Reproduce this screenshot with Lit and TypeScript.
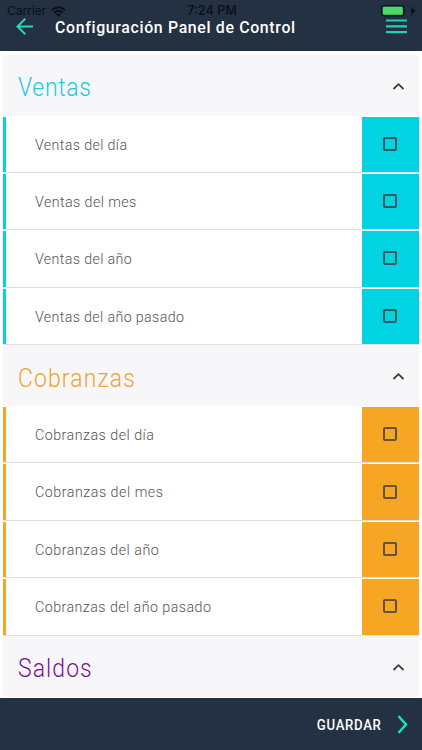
import { LitElement, html, css } from "lit";
import { customElement, property } from "lit/decorators.js";
import { styleMap } from "lit/directives/style-map.js";

interface Item { label: string; spacing: number; }
interface Section { title: string; spacing: number; color: string; ink: string; items: Item[]; }

const SECTIONS: Section[] = [
  { title: "Ventas", spacing: 0.75, color: "#00d4e3", ink: "#20cbdc", items: [
    { label: "Ventas del día", spacing: 0.39 },
    { label: "Ventas del mes", spacing: 0.45 },
    { label: "Ventas del año", spacing: 0.39 },
    { label: "Ventas del año pasado", spacing: 0.38 },
  ] },
  { title: "Cobranzas", spacing: 1.25, color: "#f6a623", ink: "#f0a432", items: [
    { label: "Cobranzas del día", spacing: 0.52 },
    { label: "Cobranzas del mes", spacing: 0.56 },
    { label: "Cobranzas del año", spacing: 0.53 },
    { label: "Cobranzas del año pasado", spacing: 0.48 },
  ] },
  { title: "Saldos", spacing: 1.2, color: "#7f0f91", ink: "#7f1292", items: [] },
];

@customElement("config-section")
class ConfigSection extends LitElement {
  @property({ attribute: false }) section!: Section;

  static styles = css`
    :host { display: block; }
    .head { height: 61px; display: flex; align-items: center; justify-content: space-between; padding: 4px 13.5px 0 15px; box-sizing: border-box; background: #f7f7fa; }
    .title { font-size: 25.5px; font-weight: 300; line-height: 30px; color: var(--ink); white-space: nowrap; transform: scaleX(.9); transform-origin: 0 50%; }
    .chevron { display: block; width: 13px; height: 9px; margin-top: -2px; }
    .row { height: 57.375px; box-sizing: border-box; display: flex; padding-top: 1px; border-bottom: 1px solid #dedede; background: #fff; }
    .bar { width: 3px; background: var(--tone); }
    .label { flex: 1; padding-left: 29px; line-height: 56.5px; height: 55px; font-size: 15.5px; font-weight: 300; color: #555; white-space: nowrap; }
    .text { display: inline-block; transform: scaleX(.92); transform-origin: 0 50%; }
    .tick { width: 57px; box-sizing: border-box; padding: 0 0 1px 21.3px; display: flex; align-items: center; background: var(--tone); }
    .box { width: 14px; height: 14px; box-sizing: border-box; border: 2px solid #444; border-radius: 2px; opacity: .85; }
  `;

  render() {
    const s = this.section;
    return html`
      <div style=${styleMap({ "--tone": s.color, "--ink": s.ink })}>
        <div class="head">
          <span class="title" style=${styleMap({ letterSpacing: s.spacing + "px" })}>${s.title}</span>
          <svg class="chevron" viewBox="0 0 13 9"><path d="M1.5 7 6.5 2.2 11.5 7" fill="none" stroke="#3c3c40" stroke-width="1.8"/></svg>
        </div>
        ${s.items.map((i) => html`
          <div class="row">
            <div class="bar"></div>
            <div class="label"><span class="text" style=${styleMap({ letterSpacing: i.spacing + "px" })}>${i.label}</span></div>
            <div class="tick"><div class="box"></div></div>
          </div>`)}
      </div>`;
  }
}

@customElement("app-root")
class AppRoot extends LitElement {
  static styles = css`
    :host { display: flex; flex-direction: column; height: 750px; overflow: hidden; position: relative; background: #fff; font-family: Roboto, "Open Sans", sans-serif; }
    .top { height: 51px; flex: none; box-sizing: border-box; display: flex; align-items: center; padding: 2px 15px 0 16px; background: #233142; }
    .back { width: 18px; height: 18px; flex: none; }
    .heading { flex: 1; margin: 0 0 0 21.2px; font-size: 16.9px; font-weight: 500; letter-spacing: .7px; color: #fff; white-space: nowrap; transform: scaleX(.94); transform-origin: 0 50%; }
    .menu { width: 21px; height: 15px; flex: none; margin-bottom: 1px; }
    .status { position: absolute; top: 4px; left: 7px; right: 5px; height: 14px; display: grid; grid-template-columns: 1fr auto 1fr; align-items: center; color: #0b0f16; font: 12.3px/14px Inter, sans-serif; }
    .net, .power { display: flex; align-items: center; }
    .net { gap: 5px; letter-spacing: -.2px; }
    .power { justify-content: flex-end; }
    .clock { font-weight: 500; font-size: 12.7px; }
    .list { flex: 1; min-height: 0; overflow: hidden; padding: 3.5px 3.3px 0; }
    .list > :last-child { height: 61px; }
    .foot { height: 52px; flex: none; box-sizing: border-box; display: flex; align-items: center; justify-content: flex-end; padding-right: 14px; background: #233142; color: #fff; font-size: 15px; font-weight: 500; }
    .save { margin-top: 2px; letter-spacing: .75px; transform: scaleX(.88); transform-origin: 100% 50%; }
    .next { width: 11px; height: 19px; margin-left: 15px; }
  `;

  render() {
    return html`
      <header class="top">
        <svg class="back" viewBox="0 0 18 18"><path d="M17 8.5H1.8M9.3 .8 1.5 8.5 9.3 16.2" fill="none" stroke="#1fd9b8" stroke-width="2"/></svg>
        <span class="heading">Configuración Panel de Control</span>
        <svg class="menu" viewBox="0 0 21 15"><path d="M0 1.5H21M0 7.3H21M0 13.2H21" stroke="#1fd1b6" stroke-width="2.2"/></svg>
      </header>
      <div class="status">
        <div class="net"><span>Carrier</span>
          <svg width="15" height="11" viewBox="0 0 15 11" fill="none" stroke="#0b0f16" stroke-width="2"><path d="M.8 4.2Q7.5-1.8 14.2 4.2M3.2 6.8Q7.5 3 11.8 6.8"/><path d="M7.5 10.7 5.2 8.3Q7.5 6.6 9.8 8.3Z" fill="#0b0f16" stroke="none"/></svg>
        </div>
        <span class="clock">7:24 PM</span>
        <div class="power">
          <svg width="36" height="12" viewBox="0 0 36 12"><rect x=".6" y=".6" width="22.4" height="10.3" rx="2.4" fill="none" stroke="#101820" stroke-width="1.1"/><rect x="1.8" y="1.8" width="20" height="8" rx="1.3" fill="#4cd964"/><path d="M24.3 4q1.6 1.8 0 3.6z" fill="#101820"/><path d="M32.8 1 28.8 6.4H31.2L30.1 11 34.6 5H32.1Z" fill="#0b0f16"/></svg>
        </div>
      </div>
      <main class="list">${SECTIONS.map((s) => html`<config-section .section=${s}></config-section>`)}</main>
      <footer class="foot">
        <span class="save">GUARDAR</span>
        <svg class="next" viewBox="0 0 11 19"><path d="M1.5 1.2 9 9.5 1.5 17.8" fill="none" stroke="#1fdcba" stroke-width="2.5"/></svg>
      </footer>`;
  }
}
